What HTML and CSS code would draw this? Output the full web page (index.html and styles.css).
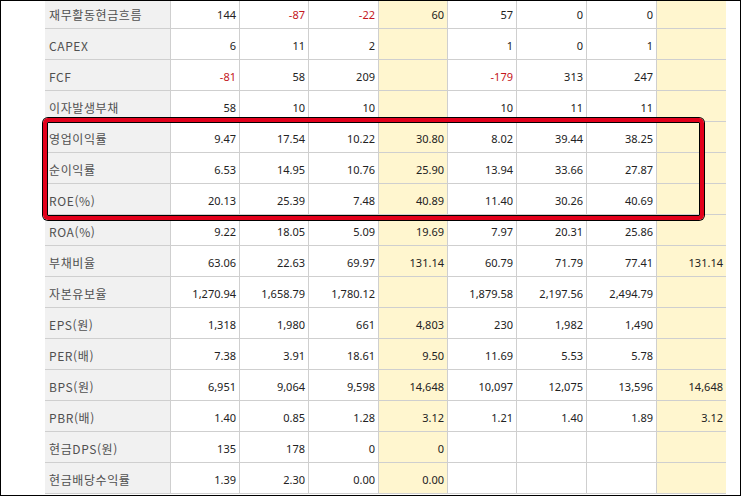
FILE: index.html
```html
<!DOCTYPE html>
<html lang="ko">
<head>
<meta charset="utf-8">
<link rel="stylesheet" href="styles.css">
</head>
<body>
<div class="frame">
  <table class="fin">
    <colgroup>
      <col class="c-label"><col class="c69"><col class="c69"><col class="c70"><col class="c69"><col class="c69"><col class="c70"><col class="c70"><col class="c69">
    </colgroup>
    <tbody>
      <tr><th>재무활동현금흐름</th><td>144</td><td class="neg">-87</td><td class="neg">-22</td><td class="hl">60</td><td>57</td><td>0</td><td>0</td><td class="hl"></td></tr>
      <tr><th>CAPEX</th><td>6</td><td>11</td><td>2</td><td class="hl"></td><td>1</td><td>0</td><td>1</td><td class="hl"></td></tr>
      <tr><th>FCF</th><td class="neg">-81</td><td>58</td><td>209</td><td class="hl"></td><td class="neg">-179</td><td>313</td><td>247</td><td class="hl"></td></tr>
      <tr><th>이자발생부채</th><td>58</td><td>10</td><td>10</td><td class="hl"></td><td>10</td><td>11</td><td>11</td><td class="hl"></td></tr>
      <tr><th>영업이익률</th><td>9.47</td><td>17.54</td><td>10.22</td><td class="hl">30.80</td><td>8.02</td><td>39.44</td><td>38.25</td><td class="hl"></td></tr>
      <tr><th>순이익률</th><td>6.53</td><td>14.95</td><td>10.76</td><td class="hl">25.90</td><td>13.94</td><td>33.66</td><td>27.87</td><td class="hl"></td></tr>
      <tr><th>ROE(%)</th><td>20.13</td><td>25.39</td><td>7.48</td><td class="hl">40.89</td><td>11.40</td><td>30.26</td><td>40.69</td><td class="hl"></td></tr>
      <tr><th>ROA(%)</th><td>9.22</td><td>18.05</td><td>5.09</td><td class="hl">19.69</td><td>7.97</td><td>20.31</td><td>25.86</td><td class="hl"></td></tr>
      <tr><th>부채비율</th><td>63.06</td><td>22.63</td><td>69.97</td><td class="hl">131.14</td><td>60.79</td><td>71.79</td><td>77.41</td><td class="hl">131.14</td></tr>
      <tr><th>자본유보율</th><td>1,270.94</td><td>1,658.79</td><td>1,780.12</td><td class="hl"></td><td>1,879.58</td><td>2,197.56</td><td>2,494.79</td><td class="hl"></td></tr>
      <tr><th>EPS(원)</th><td>1,318</td><td>1,980</td><td>661</td><td class="hl">4,803</td><td>230</td><td>1,982</td><td>1,490</td><td class="hl"></td></tr>
      <tr><th>PER(배)</th><td>7.38</td><td>3.91</td><td>18.61</td><td class="hl">9.50</td><td>11.69</td><td>5.53</td><td>5.78</td><td class="hl"></td></tr>
      <tr><th>BPS(원)</th><td>6,951</td><td>9,064</td><td>9,598</td><td class="hl">14,648</td><td>10,097</td><td>12,075</td><td>13,596</td><td class="hl">14,648</td></tr>
      <tr><th>PBR(배)</th><td>1.40</td><td>0.85</td><td>1.28</td><td class="hl">3.12</td><td>1.21</td><td>1.40</td><td>1.89</td><td class="hl">3.12</td></tr>
      <tr><th>현금DPS(원)</th><td>135</td><td>178</td><td>0</td><td class="hl">0</td><td></td><td></td><td></td><td class="hl"></td></tr>
      <tr><th>현금배당수익률</th><td>1.39</td><td>2.30</td><td>0.00</td><td class="hl">0.00</td><td></td><td></td><td></td><td class="hl"></td></tr>
    </tbody>
  </table>
  <div class="mark"></div>
</div>
</body>
</html>
```

FILE: styles.css
```css
html, body {
  margin: 0;
  padding: 0;
  background: #fff;
}

.frame {
  position: relative;
  width: 741px;
  height: 496px;
  box-sizing: border-box;
  border: 1px solid #000;
  overflow: hidden;
  background: #fff;
}

.fin {
  margin: -3px 0 0 44px;
  width: 681px;
  table-layout: fixed;
  border-collapse: separate;
  border-spacing: 0;
}

.c-label { width: 126px; }
.c69 { width: 69px; }
.c70 { width: 70px; }

.fin th,
.fin td {
  box-sizing: border-box;
  height: 31px;
  padding: 3px 3px 0 0;
  border-bottom: 1px solid #cfcfcf;
  border-right: 1px solid #cfcfcf;
  white-space: nowrap;
  overflow: hidden;
}

.fin th {
  background: #f1f1f1;
  text-align: left;
  padding-left: 4px;
  font-family: "Noto Sans CJK KR", "Noto Sans", sans-serif;
  font-weight: 400;
  font-size: 12px;
  letter-spacing: 0.6px;
  color: #505050;
}

.fin td {
  text-align: right;
  font-family: "Noto Sans", "DejaVu Sans", sans-serif;
  font-size: 11px;
  color: #222;
}

.fin td:last-child {
  border-right: none;
}

.fin td.hl {
  background: #fff6cf;
}

.fin td.neg {
  color: #c4161c;
}

.mark {
  position: absolute;
  left: 42px;
  top: 117px;
  width: 661px;
  height: 102px;
  box-sizing: border-box;
  border: 4px solid #e3001b;
  border-radius: 5px;
  box-shadow: 0 0 0 1px #000, inset 0 0 0 1px #000;
}
```
